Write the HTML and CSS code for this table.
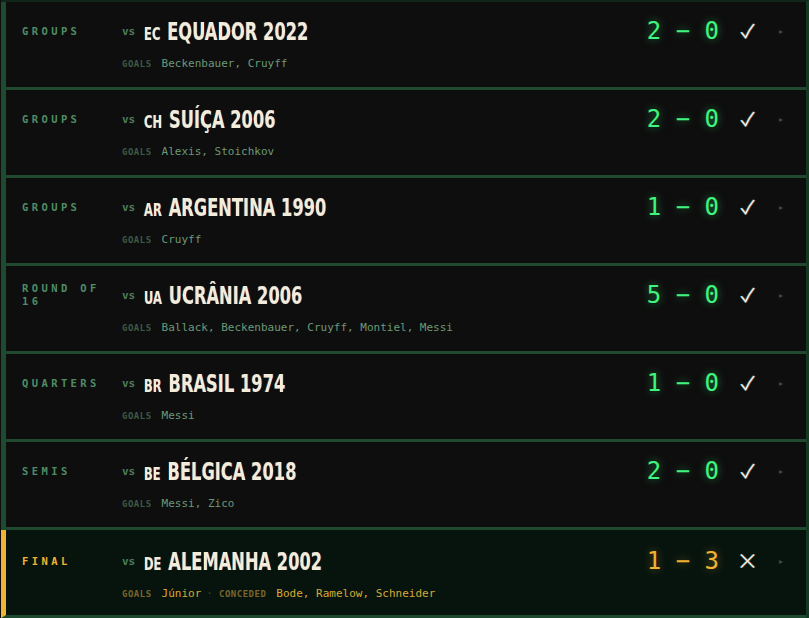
FILE: index.html
```html
<!DOCTYPE html>
<html lang="en">
  <head>
    <meta charset="UTF-8" />
    <meta name="viewport" content="width=device-width, initial-scale=1" />
    <title>Campaign</title>
    <link rel="stylesheet" href="styles.css">
  </head>
  <body>
    <div class="match-list">
      <div class="match">
        <div class="stage">Groups</div>
        <div class="title"><span class="vs">vs</span><span class="team"><span class="code">EC</span><span class="name">EQUADOR 2022</span></span></div>
        <div class="side">
          <span class="score">2 − 0</span>
          <span class="result"><svg viewBox="0 0 15 16" width="15" height="16"><path d="M1.3 9.3 L5.6 14.6 Q9 7 14 1" /></svg></span>
          <span class="arrow">▸</span>
        </div>
        <div class="goals"><span class="tag">GOALS</span>Beckenbauer, Cruyff</div>
      </div>

      <div class="match">
        <div class="stage">Groups</div>
        <div class="title"><span class="vs">vs</span><span class="team"><span class="code">CH</span><span class="name">SUÍÇA 2006</span></span></div>
        <div class="side">
          <span class="score">2 − 0</span>
          <span class="result"><svg viewBox="0 0 15 16" width="15" height="16"><path d="M1.3 9.3 L5.6 14.6 Q9 7 14 1" /></svg></span>
          <span class="arrow">▸</span>
        </div>
        <div class="goals"><span class="tag">GOALS</span>Alexis, Stoichkov</div>
      </div>

      <div class="match">
        <div class="stage">Groups</div>
        <div class="title"><span class="vs">vs</span><span class="team"><span class="code">AR</span><span class="name">ARGENTINA 1990</span></span></div>
        <div class="side">
          <span class="score">1 − 0</span>
          <span class="result"><svg viewBox="0 0 15 16" width="15" height="16"><path d="M1.3 9.3 L5.6 14.6 Q9 7 14 1" /></svg></span>
          <span class="arrow">▸</span>
        </div>
        <div class="goals"><span class="tag">GOALS</span>Cruyff</div>
      </div>

      <div class="match">
        <div class="stage">Round of 16</div>
        <div class="title"><span class="vs">vs</span><span class="team"><span class="code">UA</span><span class="name">UCRÂNIA 2006</span></span></div>
        <div class="side">
          <span class="score">5 − 0</span>
          <span class="result"><svg viewBox="0 0 15 16" width="15" height="16"><path d="M1.3 9.3 L5.6 14.6 Q9 7 14 1" /></svg></span>
          <span class="arrow">▸</span>
        </div>
        <div class="goals"><span class="tag">GOALS</span>Ballack, Beckenbauer, Cruyff, Montiel, Messi</div>
      </div>

      <div class="match">
        <div class="stage">Quarters</div>
        <div class="title"><span class="vs">vs</span><span class="team"><span class="code">BR</span><span class="name">BRASIL 1974</span></span></div>
        <div class="side">
          <span class="score">1 − 0</span>
          <span class="result"><svg viewBox="0 0 15 16" width="15" height="16"><path d="M1.3 9.3 L5.6 14.6 Q9 7 14 1" /></svg></span>
          <span class="arrow">▸</span>
        </div>
        <div class="goals"><span class="tag">GOALS</span>Messi</div>
      </div>

      <div class="match">
        <div class="stage">Semis</div>
        <div class="title"><span class="vs">vs</span><span class="team"><span class="code">BE</span><span class="name">BÉLGICA 2018</span></span></div>
        <div class="side">
          <span class="score">2 − 0</span>
          <span class="result"><svg viewBox="0 0 15 16" width="15" height="16"><path d="M1.3 9.3 L5.6 14.6 Q9 7 14 1" /></svg></span>
          <span class="arrow">▸</span>
        </div>
        <div class="goals"><span class="tag">GOALS</span>Messi, Zico</div>
      </div>

      <div class="match lost">
        <div class="stage">Final</div>
        <div class="title"><span class="vs">vs</span><span class="team"><span class="code">DE</span><span class="name">ALEMANHA 2002</span></span></div>
        <div class="side">
          <span class="score">1 − 3</span>
          <span class="result"><svg viewBox="0 0 15 16" width="15" height="16"><path d="M1 1.5 L14 14.5 M14 1.5 L1 14.5" /></svg></span>
          <span class="arrow">▸</span>
        </div>
        <div class="goals"><span class="tag">GOALS</span>Júnior<span class="dot">·</span><span class="tag">CONCEDED</span>Bode, Ramelow, Schneider</div>
      </div>
    </div>
  </body>
</html>
```

FILE: styles.css
```css
:root {
  --bg: #0e0e0e;
  --line: #1e4a30;
  --stage: #4f8d66;
  --vs: #4b7d5d;
  --title: #f2ecd9;
  --tag: #3b5a46;
  --scorers: #6c9878;
  --score: #3ff57c;
  --arrow: #33503f;
  --gold: #f2b330;
  --gold-dim: #7a652a;
  --gold-text: #d8a834;
  --lost-bg: #07140e;
}
* {
  box-sizing: border-box;
  margin: 0;
  padding: 0;
}
body {
  background: var(--bg);
  font-family: 'DejaVu Sans Mono', 'Liberation Mono', monospace;
}
.match-list {
  margin-left: 1px;
  border-top: 2px solid #10261a;
  border-right: 3px solid #153a24;
}
.match {
  display: grid;
  grid-template-columns: 86px 1fr auto;
  grid-template-rows: 28px auto;
  column-gap: 14px;
  row-gap: 10px;
  height: 88px;
  padding: 17px 23px 0 16px;
  border-left: 5px solid var(--line);
  border-bottom: 3px solid var(--line);
  background: var(--bg);
}
.stage {
  grid-row: 1;
  align-self: center;
  margin-bottom: 4px;
  font-size: 10.5px;
  font-weight: bold;
  line-height: 13px;
  letter-spacing: 3.4px;
  text-transform: uppercase;
  color: var(--stage);
}
.title {
  grid-row: 1;
  display: flex;
  align-items: center;
  white-space: nowrap;
}
.vs {
  font-size: 11px;
  font-weight: bold;
  color: var(--vs);
  margin-right: 9px;
  margin-top: -3px;
}
.team {
  display: inline-block;
  line-height: 28px;
  transform: scaleX(0.755);
  transform-origin: left center;
  font-family: 'DejaVu Sans Condensed', 'DejaVu Sans', sans-serif;
  font-stretch: condensed;
  font-weight: bold;
  color: var(--title);
  text-shadow: -1px 0 rgba(0, 170, 255, 0.4), 1px 0 rgba(255, 60, 40, 0.4);
}
.code {
  font-size: 17px;
  margin-right: 9px;
}
.name {
  font-size: 24px;
}
.side {
  grid-row: 1;
  grid-column: 3;
  display: flex;
  align-items: center;
  margin-bottom: 4px;
}
.score {
  font-size: 24px;
  line-height: 28px;
  color: var(--score);
  text-shadow: 0 0 8px rgba(63, 245, 124, 0.5);
  white-space: pre;
  margin-right: 21px;
}
.result {
  display: flex;
  width: 15px;
}
.result svg {
  stroke: var(--title);
  stroke-width: 1.5;
  fill: none;
  filter: drop-shadow(-1px 0 rgba(0, 170, 255, 0.6)) drop-shadow(1px 0 rgba(255, 110, 30, 0.6));
}
.arrow {
  margin-left: 24px;
  font-family: 'DejaVu Sans', sans-serif;
  font-size: 8px;
  color: var(--arrow);
}
.goals {
  grid-row: 2;
  grid-column: 2;
  font-size: 11px;
  line-height: 14px;
  color: var(--scorers);
  white-space: nowrap;
}
.tag {
  font-size: 9px;
  font-weight: bold;
  letter-spacing: 0.5px;
  color: var(--tag);
  margin-right: 10px;
}
.dot {
  color: #4a3f20;
  margin: 0 6px 0 5px;
}
.match.lost {
  padding-top: 19px;
  background: var(--lost-bg);
  border-left-color: var(--gold);
}
.lost .stage {
  color: var(--gold);
}
.lost .score {
  color: var(--gold);
  text-shadow: 0 0 8px rgba(242, 179, 48, 0.45);
}
.lost .goals {
  color: var(--gold-text);
}
.lost .tag {
  color: var(--gold-dim);
}
```
